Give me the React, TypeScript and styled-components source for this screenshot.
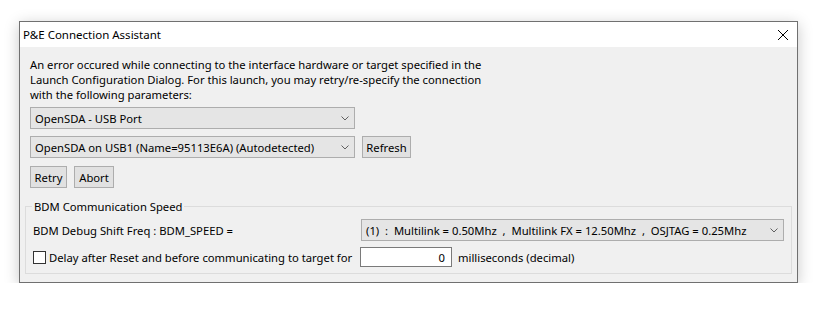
import React from "react";
import styled, {createGlobalStyle} from "styled-components";

const GlobalStyle = createGlobalStyle`
    body {
        margin: 0;
        background: #ffffff;
        font-family: "Segoe UI", "Noto Sans", sans-serif;
        font-size: 11.25px;
        color: #000000;
    }
`;

const Page = styled.div`
    padding: 21px 0 0 19px;
`;

const Window = styled.div`
    width: 779px;
    height: 262px;
    box-sizing: border-box;
    border: 1px solid #707070;
    background: #f0f0f0;
    box-shadow: 0 3px 14px rgba(0, 0, 0, 0.22);
    display: flex;
    flex-direction: column;
    white-space: nowrap;
`;

const TitleBar = styled.div`
    height: 25px;
    flex: none;
    background: #ffffff;
    display: flex;
    align-items: center;
    justify-content: space-between;
    padding: 0 9px 0 3px;
`;

const Title = styled.span`
    font-size: 11.5px;
    line-height: 15px;
`;

const Body = styled.div`
    flex: 1;
    padding: 10px 5px 6px 5px;
    display: flex;
    flex-direction: column;
`;

const Content = styled.div`
    padding: 0 5px;
    display: flex;
    flex-direction: column;
`;

const Message = styled.p`
    margin: 0;
    line-height: 15px;
`;

const Row = styled.div<{ $top: number }>`
    display: flex;
    align-items: center;
    gap: 7px;
    margin-top: ${p => p.$top}px;
`;

const Combo = styled.div<{ $width?: number }>`
    width: ${p => (p.$width ? `${p.$width}px` : "auto")};
    flex: ${p => (p.$width ? "none" : "1")};
    height: 22px;
    box-sizing: border-box;
    border: 1px solid #adadad;
    background: #e5e5e5;
    display: flex;
    align-items: center;
    justify-content: space-between;
    padding: 0 5px 0 4px;
    white-space: pre;
`;

const Button = styled.button<{ $width: number }>`
    width: ${p => p.$width}px;
    height: 22px;
    box-sizing: border-box;
    border: 1px solid #adadad;
    background: #e1e1e1;
    font: inherit;
    color: #000000;
    padding: 0;
`;

const Group = styled.fieldset`
    margin: 11px 0 0 0;
    border: 1px solid #dcdcdc;
    padding: 0 7px 6px 7px;
    display: flex;
    flex-direction: column;
`;

const Legend = styled.legend`
    padding: 0 2px;
    margin-left: -1px;
    line-height: 15px;
`;

const FieldRow = styled.div<{ $top: number }>`
    display: flex;
    align-items: center;
    margin-top: ${p => p.$top}px;
`;

const FieldLabel = styled.label<{ $width: number }>`
    width: ${p => p.$width}px;
    flex: none;
    display: flex;
    align-items: center;
    gap: 3px;
`;

const CheckBox = styled.input`
    appearance: none;
    width: 13px;
    height: 13px;
    margin: 0;
    box-sizing: border-box;
    border: 1px solid #333333;
    background: #ffffff;
`;

const NumberField = styled.input`
    width: 92px;
    height: 20px;
    box-sizing: border-box;
    border: 1px solid #7a7a7a;
    background: #ffffff;
    font: inherit;
    text-align: right;
    padding: 0 6px 0 0;
    margin: 0 6px 0 0;
`;

const Chevron = () => (
    <svg width="8" height="5" viewBox="0 0 8 5">
        <path d="M0.5 0.5 L4 4 L7.5 0.5" fill="none" stroke="#606060" strokeWidth="1"/>
    </svg>
);

const CloseIcon = () => (
    <svg width="10" height="10" viewBox="0 0 10 10">
        <path d="M0 0 L10 10 M10 0 L0 10" stroke="#000000" strokeWidth="1"/>
    </svg>
);

const App = () => {
    return (
        <Page>
            <GlobalStyle/>
            <Window>
                <TitleBar>
                    <Title>P&amp;E Connection Assistant</Title>
                    <CloseIcon/>
                </TitleBar>
                <Body>
                    <Content>
                        <Message>
                            An error occured while connecting to the interface hardware or target specified in the<br/>
                            Launch Configuration Dialog. For this launch, you may retry/re-specify the connection<br/>
                            with the following parameters:
                        </Message>
                        <Row $top={5}>
                            <Combo $width={325}>OpenSDA - USB Port<Chevron/></Combo>
                        </Row>
                        <Row $top={7}>
                            <Combo $width={325}>OpenSDA on USB1 (Name=95113E6A) (Autodetected)<Chevron/></Combo>
                            <Button $width={49}>Refresh</Button>
                        </Row>
                        <Row $top={8}>
                            <Button $width={37}>Retry</Button>
                            <Button $width={40}>Abort</Button>
                        </Row>
                    </Content>
                    <Group>
                        <Legend>BDM Communication Speed</Legend>
                        <FieldRow $top={5}>
                            <FieldLabel $width={328}>BDM Debug Shift Freq : BDM_SPEED =</FieldLabel>
                            <Combo>{"(1)  :  Multilink = 0.50Mhz  ,  Multilink FX = 12.50Mhz  ,  OSJTAG = 0.25Mhz"}<Chevron/></Combo>
                        </FieldRow>
                        <FieldRow $top={6}>
                            <FieldLabel $width={327}>
                                <CheckBox type="checkbox"/>
                                Delay after Reset and before communicating to target for
                            </FieldLabel>
                            <NumberField defaultValue="0"/>
                            milliseconds (decimal)
                        </FieldRow>
                    </Group>
                </Body>
            </Window>
        </Page>
    );
};

export default App;
